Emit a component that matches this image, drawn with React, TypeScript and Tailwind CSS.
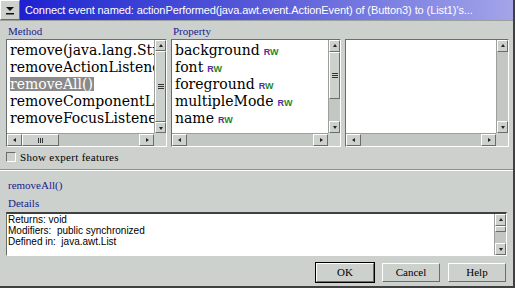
import React from 'react';

const serif = { fontFamily: '"Liberation Serif", "DejaVu Serif", serif' };
const listFont = { fontFamily: '"DejaVu Serif", "Liberation Serif", serif' };
const sans = { fontFamily: '"Liberation Sans", Arial, sans-serif' };

// raised 3d button edge used by scrollbar arrows and thumbs
const raised = 'border border-t-white border-l-white border-b-[#6a6e6a] border-r-[#6a6e6a] bg-[#cdd1cd]';
const sunken = 'border border-t-[#6a6e6a] border-l-[#6a6e6a] border-b-white border-r-white';

const Arrow: React.FC<{ dir: 'up' | 'down' | 'left' | 'right' }> = ({ dir }) => {
    const pts = {
        up: '2,5 4,2 6,5',
        down: '2,3 4,6 6,3',
        left: '5,2 2,4 5,6',
        right: '3,2 6,4 3,6',
    }[dir];
    return (
        <svg width="8" height="8" viewBox="0 0 8 8">
            <polygon points={pts} fill="#222" />
        </svg>
    );
};

const Grip: React.FC<{ vertical?: boolean }> = ({ vertical }) =>
    vertical ? (
        <div className="flex flex-col gap-[1px]">
            <div className="w-[6px] h-[1px] bg-[#333]" />
            <div className="w-[6px] h-[1px] bg-[#333]" />
            <div className="w-[6px] h-[1px] bg-[#333]" />
        </div>
    ) : (
        <div className="flex gap-[1px]">
            <div className="w-[1px] h-[5px] bg-[#333]" />
            <div className="w-[1px] h-[5px] bg-[#333]" />
            <div className="w-[1px] h-[5px] bg-[#333]" />
        </div>
    );

const VScroll: React.FC<{ thumbTop: number; thumbH: number; grip?: boolean }> = ({ thumbTop, thumbH, grip }) => (
    <div className="w-[12px] flex flex-col bg-[#c3c7c3] border-l border-[#9ca09c]">
        <div className={`h-[12px] flex items-center justify-center ${raised}`}>
            <Arrow dir="up" />
        </div>
        <div className="flex-1 flex flex-col">
            <div style={{ height: thumbTop }} />
            {thumbH > 0 && (
                <div style={{ height: thumbH }} className={`flex items-center justify-center ${raised}`}>
                    {grip && <Grip vertical />}
                </div>
            )}
        </div>
        <div className={`h-[12px] flex items-center justify-center ${raised}`}>
            <Arrow dir="down" />
        </div>
    </div>
);

const HScroll: React.FC<{ thumbLeft: number; thumbW: number }> = ({ thumbLeft, thumbW }) => (
    <div className="h-[13px] flex bg-[#c3c7c3] border-t border-[#9ca09c]">
        <div className={`w-[15px] flex items-center justify-center ${raised}`}>
            <Arrow dir="left" />
        </div>
        <div className="flex-1 flex">
            <div style={{ width: thumbLeft }} />
            {thumbW > 0 && (
                <div style={{ width: thumbW }} className={`flex items-center justify-center ${raised}`}>
                    <Grip />
                </div>
            )}
        </div>
        <div className={`w-[15px] flex items-center justify-center ${raised}`}>
            <Arrow dir="right" />
        </div>
    </div>
);

const RW = () => (
    <span className="ml-[4px] text-[9px] font-bold leading-none self-start mt-[2px]" style={sans}>
        <span className="text-[#5a2aa0]">R</span>
        <span className="text-[#1a8a1a]">W</span>
    </span>
);

const ListBox: React.FC<{
    width: number;
    children?: React.ReactNode;
    vThumb: [number, number];
    vGrip?: boolean;
    hThumb: [number, number];
}> = ({ width, children, vThumb, vGrip, hThumb }) => (
    <div style={{ width }} className={`h-[108px] flex flex-col ${sunken}`}>
        <div className="flex flex-1 min-h-0">
            <div className="flex-1 bg-white overflow-hidden pl-[3px] pt-[1px]">{children}</div>
            <VScroll thumbTop={vThumb[0]} thumbH={vThumb[1]} grip={vGrip} />
        </div>
        <div className="flex">
            <div className="flex-1">
                <HScroll thumbLeft={hThumb[0]} thumbW={hThumb[1]} />
            </div>
            <div className="w-[12px] bg-[#cdd1cd]" />
        </div>
    </div>
);

const Row: React.FC<{ children: React.ReactNode; selected?: boolean }> = ({ children, selected }) => (
    <div className="h-[17px] flex items-center whitespace-nowrap text-[14px] leading-none text-black" style={listFont}>
        <span className={selected ? 'bg-[#8a8a8a] text-white pr-[1px]' : ''}>{children}</span>
    </div>
);

const Btn: React.FC<{ label: string; def?: boolean }> = ({ label, def }) => (
    <div className={def ? 'border border-black' : 'border border-transparent'}>
        <div
            className={`w-[58px] h-[19px] flex items-center justify-center text-[11px] text-black ${raised}`}
            style={serif}
        >
            {label}
        </div>
    </div>
);

export default function App() {
    return (
        <div className="w-[515px] h-[288px] bg-[#cdd1cd] flex flex-col border-r-2 border-b-2 border-r-[#404040] border-b-[#404040] overflow-hidden">
            <div className="h-[21px] flex border-b border-[#9ca09c]">
                <div className={`w-[20px] flex flex-col items-center justify-center ${raised}`}>
                    <svg width="10" height="9" viewBox="0 0 10 9">
                        <polygon points="1,1 9,1 5,5" fill="#111" />
                        <rect x="1" y="7" width="8" height="1.5" fill="#111" />
                    </svg>
                </div>
                <div className="flex-1 flex items-center pl-[5px] bg-gradient-to-r from-[#1f1fd0] via-[#5a5ad8] to-[#a4a4e8]">
                    <span className="text-white text-[11px] whitespace-nowrap tracking-[-0.1px]" style={sans}>
                        Connect event named: actionPerformed(java.awt.event.ActionEvent) of (Button3) to (List1)'s...
                    </span>
                </div>
            </div>

            <div className="flex flex-col px-[6px] pt-[3px]">
                <div className="flex gap-[4px]">
                    <div className="flex flex-col">
                        <span className="text-[11px] text-[#1a1a90] h-[15px] pl-[2px] leading-[15px]" style={serif}>Method</span>
                        <ListBox width={161} vThumb={[0, 71]} vGrip hThumb={[0, 37]}>
                            <Row>remove(java.lang.String)</Row>
                            <Row>removeActionListener</Row>
                            <Row selected>removeAll()</Row>
                            <Row>removeComponentListener</Row>
                            <Row>removeFocusListener</Row>
                        </ListBox>
                    </div>
                    <div className="flex flex-col">
                        <span className="text-[11px] text-[#1a1a90] h-[15px] pl-[2px] leading-[15px]" style={serif}>Property</span>
                        <ListBox width={170} vThumb={[0, 47]} vGrip hThumb={[0, 0]}>
                            <Row>background<RW /></Row>
                            <Row>font<RW /></Row>
                            <Row>foreground<RW /></Row>
                            <Row>multipleMode<RW /></Row>
                            <Row>name<RW /></Row>
                        </ListBox>
                    </div>
                    <div className="flex flex-col">
                        <span className="h-[15px]" />
                        <ListBox width={164} vThumb={[0, 0]} hThumb={[0, 0]} />
                    </div>
                </div>

                <div className="flex items-center gap-[4px] mt-[4px] h-[12px]">
                    <div className={`w-[10px] h-[10px] bg-[#cdd1cd] ${sunken}`} />
                    <span className="text-[11px] text-black tracking-[0.3px]" style={serif}>Show expert features</span>
                </div>

                <div className="mt-[6px] h-[2px] border-t border-[#8c908c] border-b border-b-white -mx-[6px]" />

                <span className="mt-[8px] text-[11px] text-[#1a1a90] pl-[2px] leading-[13px]" style={serif}>removeAll()</span>
                <span className="mt-[5px] text-[11px] text-[#1a1a90] pl-[2px] leading-[13px]" style={serif}>Details</span>

                <div className={`mt-[2px] h-[44px] flex ${sunken} border-t-2 border-t-[#404040]`}>
                    <div className="flex-1 bg-white pl-[1px] text-[10px] leading-[11px] text-black" style={sans}>
                        <div>Returns: void</div>
                        <div>Modifiers:&nbsp; public synchronized</div>
                        <div>Defined in:&nbsp; java.awt.List</div>
                    </div>
                    <VScroll thumbTop={0} thumbH={6} />
                </div>

                <div className="flex justify-end gap-[6px] mt-[6px]">
                    <Btn label="OK" def />
                    <Btn label="Cancel" />
                    <Btn label="Help" />
                </div>
            </div>
        </div>
    );
}
